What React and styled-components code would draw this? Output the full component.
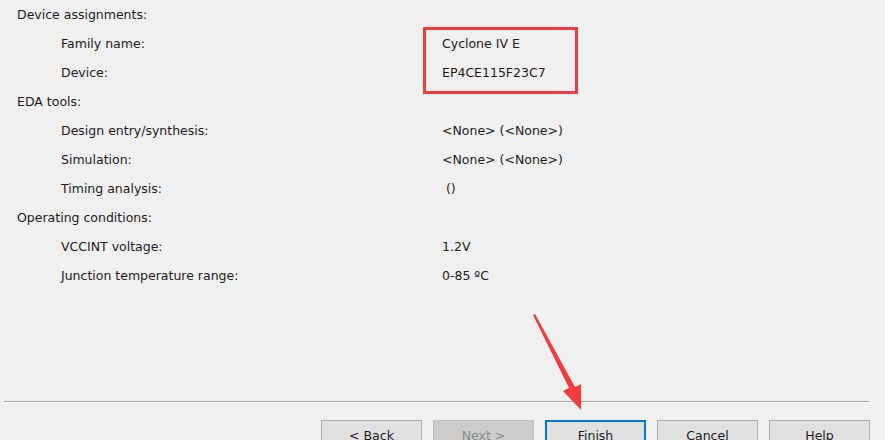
import React from 'react'
import styled, { createGlobalStyle } from 'styled-components'

const GlobalStyle = createGlobalStyle`
  html, body {
    margin: 0;
    padding: 0;
    background: #f0f0f0;
  }
  body {
    font-family: "DejaVu Sans", Verdana, sans-serif;
    color: #1b1b1b;
  }
`

const Page = styled.div`
  position: relative;
  width: 885px;
  height: 440px;
  overflow: hidden;
  display: flex;
  flex-direction: column;
  background: #f0f0f0;
`

const Summary = styled.div`
  display: grid;
  grid-template-columns: 442px 1fr;
  grid-auto-rows: 29px;
  font-size: 12.5px;
`

const Label = styled.div`
  display: flex;
  align-items: center;
  padding-left: ${props => (props.indent ? '61px' : '17px')};
`

const Value = styled.div`
  display: flex;
  align-items: center;
  white-space: pre;
`

const Spacer = styled.div`
  flex: 1;
`

const Separator = styled.div`
  margin: 0 16px 0 4px;
  height: 1px;
  background: #a0a0a0;
  border-bottom: 1px solid #ffffff;
`

const ButtonBar = styled.div`
  height: 37px;
  box-sizing: border-box;
  display: flex;
  align-items: flex-start;
  justify-content: flex-end;
  gap: 11px;
  padding: 17px 15px 0 0;
`

const Button = styled.button`
  flex: none;
  width: 101px;
  height: 30px;
  box-sizing: border-box;
  padding: 0;
  font-family: "DejaVu Sans", Verdana, sans-serif;
  font-size: 12.5px;
  color: ${props => (props.disabled ? '#8a8a8a' : '#1b1b1b')};
  background: ${props => (props.disabled ? '#cccccc' : '#e1e1e1')};
  border: ${props =>
    props.primary ? '2px solid #0078d7' : `1px solid ${props.disabled ? '#bfbfbf' : '#adadad'}`};
  border-radius: 0;
`

const Highlight = styled.div`
  position: absolute;
  left: 423px;
  top: 27px;
  width: 155px;
  height: 67px;
  box-sizing: border-box;
  border: 3px solid #f23b3f;
`

const Arrow = styled.svg`
  position: absolute;
  left: 525px;
  top: 310px;
`

const rows = [
  { label: 'Device assignments:' },
  { label: 'Family name:', value: 'Cyclone IV E', indent: true },
  { label: 'Device:', value: 'EP4CE115F23C7', indent: true },
  { label: 'EDA tools:' },
  { label: 'Design entry/synthesis:', value: '<None> (<None>)', indent: true },
  { label: 'Simulation:', value: '<None> (<None>)', indent: true },
  { label: 'Timing analysis:', value: ' ()', indent: true },
  { label: 'Operating conditions:' },
  { label: 'VCCINT voltage:', value: '1.2V', indent: true },
  { label: 'Junction temperature range:', value: '0-85 \u00BAC', indent: true },
]

const App = () => {
  return (
    <Page>
      <GlobalStyle />
      <Summary>
        {rows.map(row => (
          <React.Fragment key={row.label}>
            <Label indent={row.indent}>{row.label}</Label>
            <Value>{row.value || ''}</Value>
          </React.Fragment>
        ))}
      </Summary>
      <Spacer />
      <Separator />
      <ButtonBar>
        <Button>&lt; Back</Button>
        <Button disabled>Next &gt;</Button>
        <Button primary>Finish</Button>
        <Button>Cancel</Button>
        <Button>Help</Button>
      </ButtonBar>

      <Highlight />
      <Arrow width="70" height="110" viewBox="0 0 70 110">
        <path d="M8 5 L44 78 L38 81 L56 100 L56 74 L50 77 L10 4 Z" fill="#f43b3e" />
      </Arrow>
    </Page>
  )
}

export default App
